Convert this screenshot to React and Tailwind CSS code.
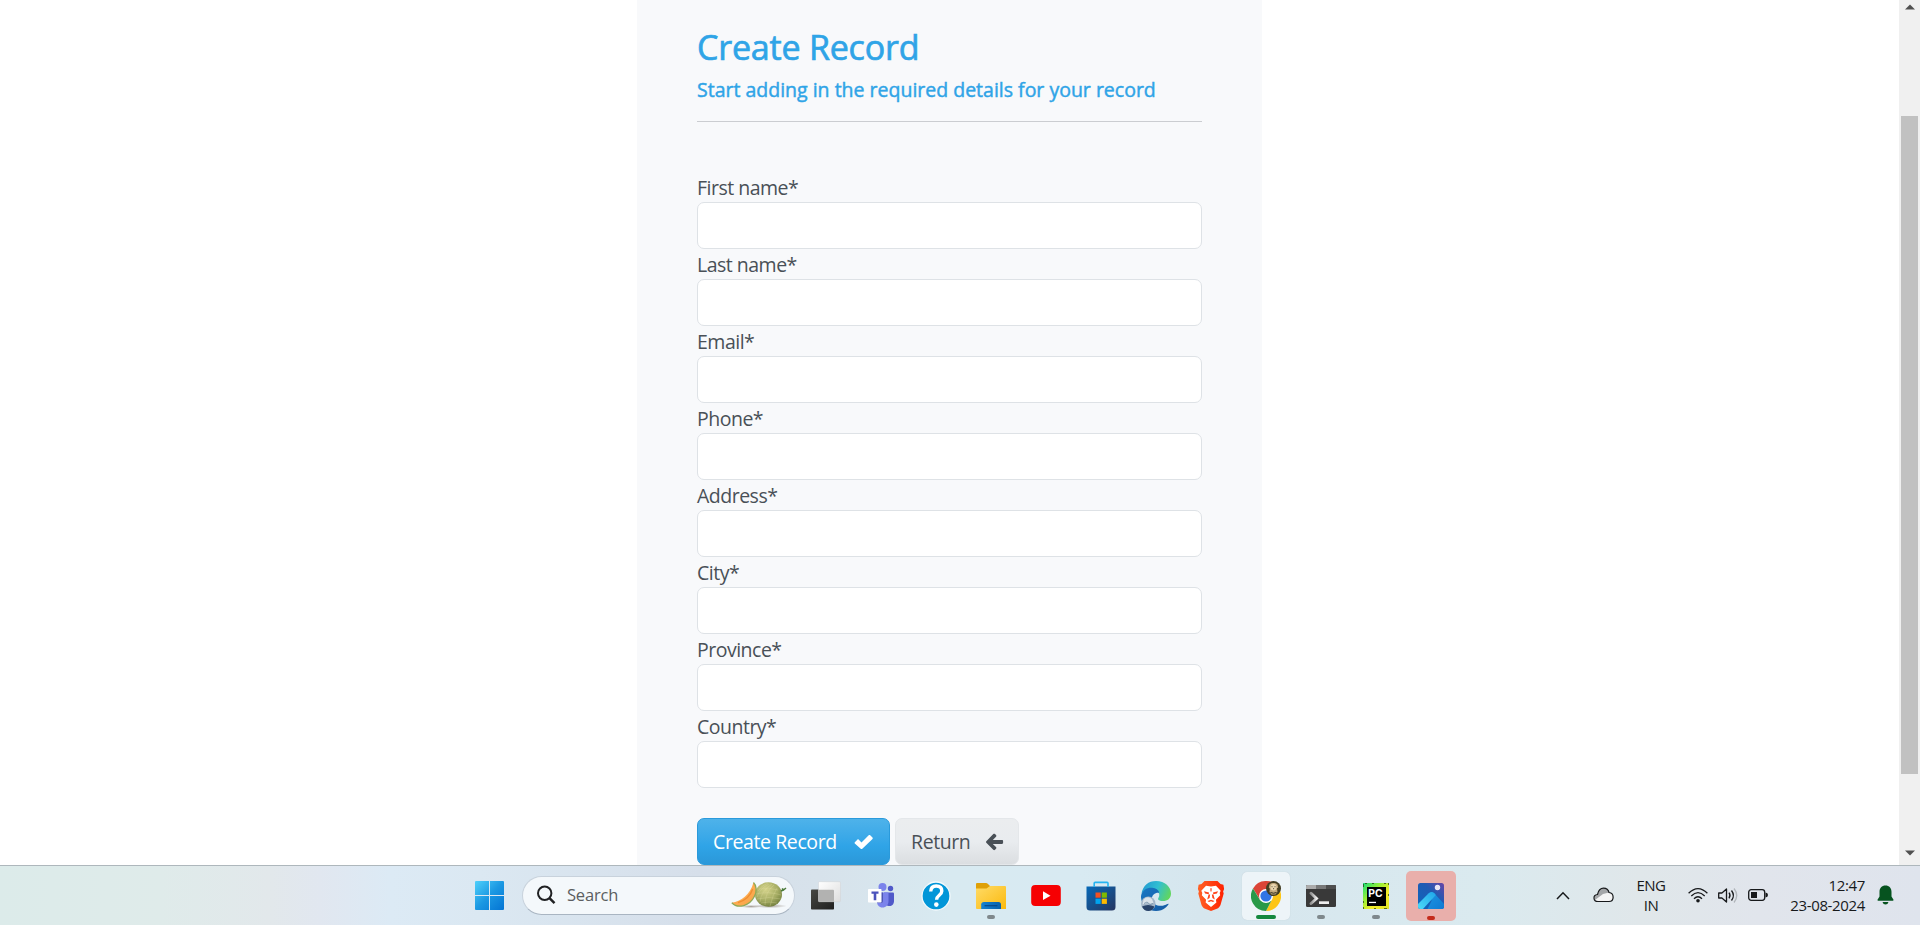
import React from "react";

const fields = [
  "First name*",
  "Last name*",
  "Email*",
  "Phone*",
  "Address*",
  "City*",
  "Province*",
  "Country*",
];

function Field({ label }) {
  return (
    <div className="flex h-[77px] flex-col">
      <label className="flex h-[30px] items-end text-[19.5px] leading-[28px] tracking-[-0.5px] text-[#495057]">
        {label}
      </label>
      <input className="h-[47px] w-full rounded-[7px] border border-[#dee2e6] bg-white px-4 text-xl outline-none" />
    </div>
  );
}

function FormPanel() {
  return (
    <main className="ml-[637px] w-[625px] shrink-0 bg-[#f8f9fb] px-[60px]">
      <h1 className="mt-[24px] h-[46px] text-[34px] leading-[46px] tracking-[-0.2px] text-[#2fa4e7] [-webkit-text-stroke:0.7px_#2fa4e7]">
        Create Record
      </h1>
      <h2 className="mt-[8px] h-6 text-[19.5px] leading-6 text-[#2fa4e7] [-webkit-text-stroke:0.45px_#2fa4e7]">
        Start adding in the required details for your record
      </h2>
      <hr className="mt-[19px] h-px border-0 bg-[#cbcdd1]" />
      <form className="mt-[50px]">
        {fields.map((f) => (
          <Field key={f} label={f} />
        ))}
        <div className="mt-[30px] flex gap-[5px] text-[19.5px] tracking-[-0.4px]">
          <button
            type="button"
            className="flex h-[47px] w-[193px] items-center rounded-[7px] border border-[#2a9adb] bg-linear-to-b from-[#4eb2ea] via-[#2fa4e7] via-60% to-[#2b98d9] pl-[15px] text-white"
          >
            <span className="w-[141px] text-left">Create Record</span>
            <svg className="size-5 fill-white" viewBox="0 0 20 20">
              <path d="M.8 10.200 3.300 7.700c.5-.5 1-.5 1.500 0L7.500 10.500 14.700 3.300c.5-.5 1-.5 1.500 0l2.300 2.300c.4.500.4 1 0 1.500L8.300 16.700c-.5.500-1.100.500-1.600 0L.8 11.600c-.4-.5-.4-1 0-1.400z" />
            </svg>
          </button>
          <button
            type="button"
            className="flex h-[47px] w-[124px] items-center rounded-[7px] border border-[#e4e7ea] bg-linear-to-b from-[#ebedef] via-[#e9ecef] via-50% to-[#dbdee1] pl-[15px] text-[#495057]"
          >
            <span className="w-[74px] text-left">Return</span>
            <svg className="size-5 fill-[#495057]" viewBox="0 0 20 20">
              <path d="m1.300 9.200 7-7.200c.500-.500 1.200-.500 1.700 0l1 1c.5.500.5 1.200 0 1.700L7.800 8H17c.7 0 1.100.5 1.100 1.200v1.500c0 .7-.4 1.200-1.100 1.200H7.800l3.200 3.200c.5.500.5 1.200 0 1.700l-1 1c-.5.500-1.200.500-1.700 0l-7-7.100c-.4-.4-.4-1 0-1.500z" />
            </svg>
          </button>
        </div>
      </form>
    </main>
  );
}

function Scrollbar() {
  return (
    <div className="flex w-[21px] shrink-0 flex-col items-center bg-[#f0f0f0]">
      <svg className="mt-[4px] h-[6px] w-[10px] fill-[#505050]" viewBox="0 0 10 6">
        <path d="M5 .5 10 5.500H0z" />
      </svg>
      <div className="mt-[106px] h-[658px] w-[17px] bg-[#c1c1c1]" />
      <svg className="mt-[76px] h-[6px] w-[10px] fill-[#505050]" viewBox="0 0 10 6">
        <path d="M0 .5h10L5 5.500z" />
      </svg>
    </div>
  );
}

function WindowsLogo() {
  return (
    <svg className="size-[29px]" viewBox="0 0 29 29">
      <defs>
        <linearGradient id="win" x1="0" y1="0" x2="29" y2="29" gradientUnits="userSpaceOnUse">
          <stop stopColor="#4fd0fb" />
          <stop offset=".5" stopColor="#1b98e2" />
          <stop offset="1" stopColor="#0474d4" />
        </linearGradient>
      </defs>
      <path
        fill="url(#win)"
        d="M1 0h13v14H0V1q0-1 1-1zm14 0h13q1 0 1 1v13H15zM0 15h14v14H1q-1 0-1-1zm15 0h14v13q0 1-1 1H15z"
      />
    </svg>
  );
}

function Melon() {
  return (
    <svg className="h-[28px] w-[56px]" viewBox="0 0 56 28">
      <defs>
        <radialGradient id="melon" cx=".4" cy=".3" r=".75">
          <stop stopColor="#d4d38a" />
          <stop offset=".6" stopColor="#a5ac63" />
          <stop offset="1" stopColor="#6f7c3c" />
        </radialGradient>
        <linearGradient id="slice" x1="0" y1="0" x2="1" y2="1">
          <stop stopColor="#f08a35" />
          <stop offset=".55" stopColor="#fdac50" />
          <stop offset="1" stopColor="#f6a048" />
        </linearGradient>
        <radialGradient id="shade">
          <stop stopColor="#8d8378" stopOpacity=".75" />
          <stop offset="1" stopColor="#8d8378" stopOpacity="0" />
        </radialGradient>
      </defs>
      <ellipse cx="39" cy="25" rx="17" ry="2.200" fill="url(#shade)" />
      <ellipse cx="20" cy="25.500" rx="11" ry="1.600" fill="url(#shade)" />
      <ellipse cx="37.500" cy="13.500" rx="13.500" ry="12.200" fill="url(#melon)" />
      <path
        d="M27 10q4-6 10-8M26 16q3-9 12-13M29 21q1-11 12-18M34 24q0-13 9-20M39 25q3-12 7-18M28 8q10-2 19 1M25 13q13-3 25 1M26 18q12-3 24 0M30 22q8-2 16 0"
        fill="none"
        stroke="#e2dfa5"
        strokeOpacity=".4"
        strokeWidth=".7"
      />
      <path d="M50 10q2-.500 3-2M51 7.500l1.500 1.500L55 7" fill="none" stroke="#4c7a3d" strokeWidth="1.500" />
      <path
        d="M.8 21.800C10 20.500 19 14 22.500 1.500c3.200 3 3.500 9 .8 14C19 24.500 7 28.500.8 21.800z"
        fill="url(#slice)"
      />
      <path d="M22.500 1.500c3.200 3 3.500 9 .8 14C19 24.500 7 28.500.8 21.800" fill="none" stroke="#8ea957" strokeWidth="1.300" />
      <path d="M7 21.700Q18.500 18 21.700 8" fill="none" stroke="#e98125" strokeOpacity=".7" strokeWidth="1.300" />
    </svg>
  );
}

function TaskView() {
  return (
    <svg className="size-[30px]" viewBox="0 0 30 30">
      <defs>
        <linearGradient id="tvd" x1="0" y1="0" x2="1" y2="1">
          <stop stopColor="#474743" />
          <stop offset="1" stopColor="#20201f" />
        </linearGradient>
        <linearGradient id="tvl" x1="0" y1="0" x2="1" y2="1">
          <stop stopColor="#fff" />
          <stop offset="1" stopColor="#dedede" />
        </linearGradient>
      </defs>
      <rect y="8.500" width="23" height="20" rx=".8" fill="url(#tvd)" />
      <rect x="7.500" y=".7" width="22" height="20" rx="1" fill="url(#tvl)" stroke="#d0d3d6" strokeWidth=".5" />
      <path d="M7.500 8.700H22q1 0 1 1v11H7.500z" fill="#b2b2b1" />
    </svg>
  );
}

function Teams() {
  return (
    <svg className="size-[28px]" viewBox="0 0 28 28">
      <circle cx="23.500" cy="6.500" r="2.700" fill="#5059c9" />
      <path d="M17 10.500h9q1 0 1 1v7.500c0 3-2 5-4.500 5S17 22 17 19z" fill="#5059c9" />
      <circle cx="15.500" cy="5" r="4" fill="#7b83eb" />
      <path d="M10 10.500h10.500q1 0 1 1v7.500c0 4-2.500 6.500-6 6.500s-5.500-2.500-5.500-6z" fill="#7b83eb" />
      <path d="M10 10.500h6v8.500q0 2-2 2h-4z" fill="#4d55b5" />
      <rect x="1" y="7" width="13.500" height="13.500" rx=".7" fill="#fff" />
      <path d="M4.500 9.500h7v2.200H9.300v6.500H6.700v-6.500H4.500z" fill="#4b53bc" />
    </svg>
  );
}

function Help() {
  return (
    <svg className="size-[30px]" viewBox="0 0 30 30">
      <circle cx="15" cy="15" r="14" fill="#0296d8" stroke="#f4fafc" strokeWidth="1.300" />
      <path
        d="M9.700 10.500c.2-4 2.500-5.500 5.500-5.500 3.500 0 5.600 1.900 5.600 5 0 4.400-5.200 4.200-5.200 8.700"
        fill="none"
        stroke="#fff"
        strokeWidth="3.400"
      />
      <circle cx="15.300" cy="23.600" r="2.300" fill="#fff" />
    </svg>
  );
}

function Explorer() {
  return (
    <svg className="size-[30px]" viewBox="0 0 30 30">
      <defs>
        <linearGradient id="fold" x1="0" y1="0" x2="1" y2="1">
          <stop stopColor="#ffdb67" />
          <stop offset="1" stopColor="#fbb90d" />
        </linearGradient>
        <linearGradient id="tray" x1="0" y1="0" x2="1" y2="0">
          <stop stopColor="#1682d2" />
          <stop offset="1" stopColor="#0860aa" />
        </linearGradient>
      </defs>
      <path d="M0 3q0-1 1-1h9q1 0 2 1l2 2v6H0z" fill="#dfa007" />
      <path d="M0 7.500h10.500L14 5h15q1 0 1 1v22H1q-1 0-1-1z" fill="url(#fold)" />
      <path d="M5.200 28v-4.500Q5.200 21 8 21h14.500Q25 21 25 23.500V28z" fill="url(#tray)" />
      <path d="M9 24.700h12" stroke="#073f7d" strokeWidth="1.100" strokeLinecap="round" />
    </svg>
  );
}

function YouTube() {
  return (
    <svg className="size-[30px]" viewBox="0 0 30 30">
      <rect x=".2" y="4" width="29.600" height="21" rx="4" fill="#f60002" />
      <path d="m12 10.300 7.500 4.400-7.500 4.400z" fill="#fff" />
    </svg>
  );
}

function Store() {
  return (
    <svg className="size-[30px]" viewBox="0 0 30 30">
      <defs>
        <linearGradient id="bag" x1="0" y1="0" x2="1" y2="1">
          <stop stopColor="#0669b8" />
          <stop offset="1" stopColor="#273660" />
        </linearGradient>
      </defs>
      <path d="M.5 5.500h29V26q0 3.500-3.500 3.500H4Q.5 29.500.5 26z" fill="url(#bag)" />
      <path d="M8.200 6V2.300q0-.9.900-.9h12q.9 0 .9.900V6" fill="none" stroke="#25b4f1" strokeWidth="1.600" />
      <path fill="#f25022" d="M9.500 11.500h5.200v5.200H9.500z" />
      <path fill="#7fba00" d="M15.700 11.500h5.200v5.200h-5.200z" />
      <path fill="#00a4ef" d="M9.500 17.700h5.200v5.200H9.500z" />
      <path fill="#ffb900" d="M15.700 17.700h5.200v5.200h-5.200z" />
    </svg>
  );
}

function Edge() {
  return (
    <svg className="size-[30px]" viewBox="0 0 30 30">
      <defs>
        <linearGradient id="edgeTop" x1="0" y1=".3" x2="1" y2=".6">
          <stop stopColor="#249bd2" />
          <stop offset=".5" stopColor="#31bfd2" />
          <stop offset="1" stopColor="#62d65d" />
        </linearGradient>
        <linearGradient id="edgeLow" x1="0" y1="0" x2="1" y2="1">
          <stop stopColor="#1877c4" />
          <stop offset="1" stopColor="#1559a2" />
        </linearGradient>
      </defs>
      <path
        d="M.5 12.500C2 4.500 7.500 0 15 0c9 0 15 6 15 12.500 0 5-3.500 7.500-8 7.500-4.500 0-5.500-2-4.600-3 1.200-1.700 1.300-4-.2-5.700C13 6.500 5 7 .5 12.500z"
        fill="url(#edgeTop)"
      />
      <path
        d="M0 15C1 9 6 6.500 11 6.700c4 .2 6.500 2.300 7.300 5-5-.5-8 3-7.200 7 .9 5 6.900 7.600 12.900 5.300 1.400-.5 3-1.700 3.500-1.200.5.700-4.500 7.200-12.500 7.200S-.5 23 0 15z"
        fill="url(#edgeLow)"
      />
      <circle cx="7.300" cy="22.700" r="7.200" fill="#a3b5c8" />
      <path d="M1 25.500q6-3 12.500 0-2 4.500-6.200 4.500T1 25.500z" fill="#29436a" />
      <path d="M2.500 18.500q4-4 8.500-.5l1.500 4-3.500 1-3-1-4.500 1.500z" fill="#dbe3ea" />
      <path d="m3 22.500 3-1.500 3 2.500 3-1" fill="none" stroke="#6f8ba5" strokeWidth=".8" />
    </svg>
  );
}

function Brave() {
  return (
    <svg className="size-[30px]" viewBox="0 0 30 30">
      <defs>
        <linearGradient id="brave">
          <stop stopColor="#ff6125" />
          <stop offset="1" stopColor="#ff2100" />
        </linearGradient>
      </defs>
      <path
        d="M8.500 0h13l3 3 2.900.8.700 4.200-1 2.600.6 2-3.200 11.500c-.5 1.600-1.900 2.800-3 3.500L15 30l-6.500-2.400c-1.100-.7-2.500-1.900-3-3.500L2.300 12.600l.6-2-1-2.600.7-4.200L5.500 3z"
        fill="url(#brave)"
      />
      <path
        d="m10 4.700 5 .9 5-.9 4.700 5.100-1 2.200.5 2.200-4.300 4.600.5 2.800L15 26l-5.400-4.400.5-2.800-4.300-4.600.5-2.200-1-2.200z"
        fill="#fff"
      />
      <path
        d="m8 10.300 5 1.300-.3 1.700-3.600-.8zm14 0-5 1.300.3 1.700 3.600-.8zM12.600 13.500h1.500l-.5 3.600-2.400 1.400zm4.800 0h-1.500l.5 3.600 2.400 1.400zM11.500 20l3.500-1.300 3.500 1.300-1.500 1.100-2-.8-2 .8zM14.300 7.200h1.400l-.2 3.300h-1z"
        fill="#ff431a"
      />
    </svg>
  );
}

function Chrome() {
  return (
    <svg className="size-[30px]" viewBox="0 0 30 30">
      <path d="M2 7.500a15 15 0 0 1 26 0L15 8.500 8.900 18.500z" fill="#db4437" />
      <path d="M28 7.500A15 15 0 0 1 15 30l6-11.500L19 8z" fill="#fdc516" />
      <path d="M2 7.500l7 11.400q4 4 11.500.5L15 30A15 15 0 0 1 2 7.500z" fill="#299948" />
      <circle cx="15" cy="15" r="7" fill="#fff" />
      <circle cx="15" cy="15" r="5.600" fill="#3275e5" />
      <circle cx="22.500" cy="7.500" r="7.500" fill="#443d22" />
      <path d="M18.500 3.500q2-2 4-1.500 2.500-.5 4 1.500l.7 3-1.200.8.500 3.700-2 2.500h-4L18.500 11l.3-3.500-1-1z" fill="#c1a77c" />
      <ellipse cx="22.500" cy="6.200" rx="3" ry="3.300" fill="#ead7b0" />
      <path d="M21 5.300v.9m3-.9v.9m-1.900 1.500h1" stroke="#3b3022" strokeWidth=".9" />
      <path d="M19.500 11.500q3 1.500 6 0" stroke="#33301f" fill="none" />
    </svg>
  );
}

function Terminal() {
  return (
    <svg className="size-[30px]" viewBox="0 0 30 30">
      <defs>
        <linearGradient id="chev" x1="0" y1="0" x2="1" y2="0">
          <stop stopColor="#919191" />
          <stop offset="1" stopColor="#ececec" />
        </linearGradient>
      </defs>
      <rect y="4" width="30" height="22" rx="1.300" fill="#393939" />
      <path d="M1.300 4H10v4H0V5.300Q0 4 1.300 4z" fill="#ababab" />
      <path d="M10 4h10v4H10z" fill="#787878" />
      <path d="M20 4h8.700Q30 4 30 5.300V8H20z" fill="#4e4e4e" />
      <path d="m5 12.200 5.500 5.300L5 22.500" fill="none" stroke="url(#chev)" strokeWidth="2.900" strokeLinecap="round" />
      <path d="M13 20.300h10V23H13z" fill="#ededed" />
    </svg>
  );
}

function PyCharm() {
  return (
    <svg className="size-[26px]" viewBox="0 0 26 26">
      <defs>
        <linearGradient id="pc" x1="0" y1="0" x2="1" y2="1">
          <stop stopColor="#16dc7c" />
          <stop offset=".35" stopColor="#96ef36" />
          <stop offset=".65" stopColor="#f7ed29" />
          <stop offset="1" stopColor="#dfe72c" />
        </linearGradient>
      </defs>
      <path fill="url(#pc)" d="M0 0h26v26H0z" />
      <path d="M.4 1v3m0 14v2m0 4v2M25.600 0v2m0 9v2M2 .4h2m5 0h2m10 0h2M11 25.600h2m8 0h3" stroke="#243c0c" strokeWidth=".8" />
      <path fill="#000" d="M4 4h19v19H4z" />
      <text x="5.300" y="13.700" fontFamily="Inter" fontWeight="700" fontSize="10.300" fill="#fff" textLength="14.300">
        PC
      </text>
      <path fill="#fff" d="M6 18.800h7v1.300H6z" />
    </svg>
  );
}

function Photos() {
  return (
    <svg className="size-[26px]" viewBox="0 0 26 26">
      <defs>
        <linearGradient id="phbg" x1="0" y1="1" x2="1" y2="0">
          <stop stopColor="#0d66bd" />
          <stop offset=".6" stopColor="#1f5bb3" />
          <stop offset="1" stopColor="#6a45a6" />
        </linearGradient>
        <linearGradient id="phm" x1="0" y1="1" x2="1" y2="0">
          <stop stopColor="#4fdcf8" />
          <stop offset="1" stopColor="#1fa5ea" />
        </linearGradient>
        <linearGradient id="phr" x1="0" y1="0" x2="1" y2="1">
          <stop stopColor="#1d96e2" />
          <stop offset="1" stopColor="#0f78d2" />
        </linearGradient>
        <clipPath id="phc">
          <rect width="26" height="26" rx="2.500" />
        </clipPath>
      </defs>
      <g clipPath="url(#phc)">
        <path fill="url(#phbg)" d="M0 0h26v26H0z" />
        <path d="M13.500 9q1.700 0 3 1.500L27 22v5H9l4.500-9z" fill="url(#phr)" />
        <path d="M-1 22 10.700 10.300q2.800-2.600 5.600 0l1.500 1.700L4.500 26.500H-1z" fill="url(#phm)" />
        <circle cx="19.500" cy="4.500" r="2.700" fill="#e9e7f5" />
      </g>
    </svg>
  );
}

const apps = [
  { Icon: TaskView },
  { Icon: Teams },
  { Icon: Help },
  { Icon: Explorer, mark: "w-2 bg-[#7f888c]" },
  { Icon: YouTube },
  { Icon: Store },
  { Icon: Edge },
  { Icon: Brave },
  { Icon: Chrome, tile: "size-12 bg-[#edf4f8] shadow-[0_0_1px_#b9c7ce]", mark: "w-5 bg-[#15883e]" },
  { Icon: Terminal, mark: "w-2 bg-[#7f888c]" },
  { Icon: PyCharm, mark: "w-2 bg-[#7f888c]" },
  { Icon: Photos, tile: "size-[50px] bg-[#e9afab]", mark: "w-2 bg-[#c42b1c]" },
];

function AppButton({ Icon, tile = "size-12", mark }) {
  return (
    <div className="flex w-[55px] shrink-0 justify-center">
      <div className={`relative flex items-center justify-center rounded-[5px] ${tile}`}>
        <Icon />
        {mark && <span className={`absolute bottom-px h-1 rounded-full ${mark}`} />}
      </div>
    </div>
  );
}

function Tray() {
  return (
    <div className="ml-[98px] flex shrink-0 items-center pb-px text-[#17191b]">
      <svg className="h-[9px] w-[14px]" viewBox="0 0 14 9">
        <path d="m1 8 6-6.200L13 8" fill="none" stroke="currentColor" strokeWidth="1.500" />
      </svg>
      <svg className="ml-[23px] h-[16px] w-[21px]" viewBox="0 0 21 16">
        <path
          d="M5 14.500c-5 0-5.500-6.500-.5-7C5.500 3 8 1.200 10.500 1.200c3 0 5 2 5.500 4.300 5.500.5 5.500 9 0 9z"
          fill="#f4f4f4"
        />
        <path d="M4.500 7.500C5.500 3 8 1.200 10.500 1.200c3 0 5 2 5.500 4.300L10 7 2 13Q-.5 8.500 4.500 7.500z" fill="#a4a6a8" />
        <path
          d="M5 14.500c-5 0-5.500-6.500-.5-7C5.500 3 8 1.200 10.500 1.200c3 0 5 2 5.500 4.300 5.500.5 5.500 9 0 9z"
          fill="none"
          stroke="currentColor"
          strokeWidth="1.200"
        />
      </svg>
      <div className="ml-[17px] w-10 text-center text-[15px] leading-5 tracking-[-0.5px]">
        <div>ENG</div>
        <div>IN</div>
      </div>
      <svg className="ml-[17px] h-[16px] w-5" viewBox="0 0 20 16" fill="none" stroke="currentColor" strokeWidth="1.300">
        <path d="M.6 6.300q9.400-9.500 18.800 0M3.300 9q6.700-6.700 13.400 0M6 11.700q4-4 8 0" />
        <circle cx="10" cy="13.700" r="1.800" fill="currentColor" stroke="none" />
      </svg>
      <svg className="ml-[10px] h-[17px] w-[21px]" viewBox="0 0 21 17" fill="none" stroke="currentColor" strokeWidth="1.300">
        <path d="M.7 6v5h3.200l4.600 4V2L3.900 6z" strokeLinejoin="round" />
        <path d="M11 5.700q2 2.800 0 5.600M13.500 3.500q3.800 5 0 10" />
        <path d="M16 1.500q5.500 7 0 14" stroke="#b1b6bb" />
      </svg>
      <svg className="ml-[9px] h-[14px] w-5" viewBox="0 0 20 14">
        <rect x=".7" y="1.700" width="16" height="10.600" rx="2.500" fill="none" stroke="currentColor" strokeWidth="1.300" />
        <path d="M3 4h6v6H3zM17.500 4.500q2.500.3 2.500 2.500t-2.500 2.500z" fill="currentColor" />
      </svg>
      <div className="ml-[17px] w-20 text-right text-[15px] leading-5 tracking-[-0.35px]">
        <div>12:47</div>
        <div>23-08-2024</div>
      </div>
      <svg className="ml-3 h-[20px] w-[17px] fill-[#06531f]" viewBox="0 0 17 20">
        <path d="M8.500.5c3.700 0 6 2.700 6 6.200v4.800l2 3.300c.2.400 0 .9-.6.900H1.100c-.6 0-.8-.5-.6-.9l2-3.300V6.700c0-3.500 2.300-6.200 6-6.200zM5.500 17h6q-.7 2.500-3 2.500t-3-2.500z" />
      </svg>
    </div>
  );
}

function Taskbar() {
  return (
    <footer className="flex h-[60px] items-center border-t border-[#aeb7bc] bg-[linear-gradient(90deg,#dcebea_0px,#dfebea_160px,#e2e8eb_270px,#e1e7f0_320px,#dceaf5_390px,#dbe8f2_480px,#d6dfea_700px,#d7e2eb_820px,#d8eaf1_950px,#d8eaf2_1080px,#d6e6ee_1200px,#daeaef_1480px,#e0e7ea_1640px,#e1e5ec_1760px,#dfe4ed_1920px)]">
      <div className="ml-[475px] shrink-0">
        <WindowsLogo />
      </div>
      <div className="mb-px ml-[18px] flex h-[39px] w-[273px] shrink-0 items-center rounded-full border border-[#c8d2dc] border-b-[#a9b5c2] bg-[#f4f8fb] pl-[13px]">
        <svg className="size-5" viewBox="0 0 20 20" fill="none" stroke="#202123" strokeWidth="2">
          <circle cx="8.700" cy="8.300" r="6.700" />
          <path d="m13.500 13.200 5 5" strokeWidth="2.400" />
        </svg>
        <span className="ml-[11px] w-[164px] text-[16.5px] tracking-[-0.2px] text-[#5b5e61]">Search</span>
        <Melon />
      </div>
      <nav className="ml-[3px] flex h-full items-center">
        {apps.map((app, i) => (
          <AppButton key={i} {...app} />
        ))}
      </nav>
      <Tray />
    </footer>
  );
}

export default function App() {
  return (
    <div className="flex h-[925px] w-[1920px] flex-col overflow-hidden bg-white font-['Open_Sans','Noto_Sans',sans-serif]">
      <div className="flex h-[865px] justify-between overflow-hidden">
        <FormPanel />
        <Scrollbar />
      </div>
      <Taskbar />
    </div>
  );
}
